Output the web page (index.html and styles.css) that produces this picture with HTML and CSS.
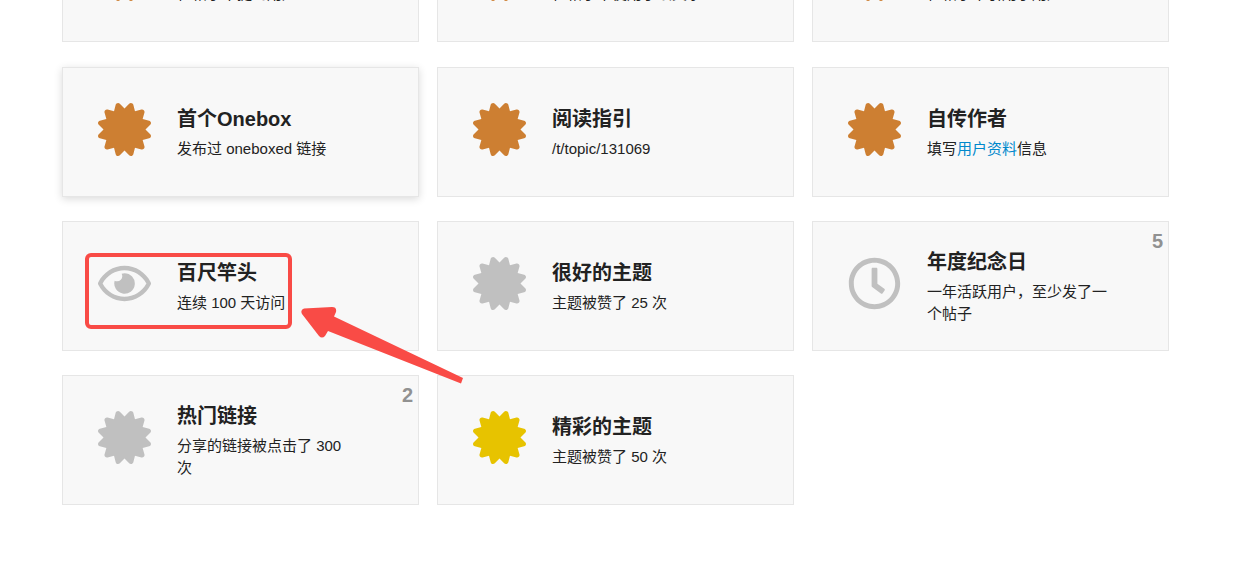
FILE: index.html
```html
<!DOCTYPE html>
<html lang="zh-CN">
<head>
  <meta charset="UTF-8" />
  <title>徽章</title>
  <link rel="stylesheet" href="styles.css">
</head>
<body>
  <!-- 图标定义 -->
  <svg class="icon-defs" aria-hidden="true">
    <symbol id="certificate" viewBox="0 0 512 512">
      <path d="M458.622 255.92l45.985-45.005c13.708-12.977 7.316-36.039-10.664-40.339l-62.65-15.99 17.661-62.015c4.991-17.838-11.829-34.663-29.661-29.671l-61.994 17.667-15.984-62.671C337.085.197 313.765-6.276 300.99 7.228L256 53.57 211.011 7.229c-12.63-13.351-36.047-7.234-40.325 10.668l-15.984 62.671-61.995-17.667C74.87 57.907 58.056 74.738 63.046 92.572l17.661 62.015-62.65 15.99C.069 174.878-6.31 197.944 7.392 210.915l45.985 45.005-45.985 45.004c-13.708 12.977-7.316 36.039 10.664 40.339l62.65 15.99-17.661 62.015c-4.991 17.838 11.829 34.663 29.661 29.671l61.994-17.667 15.984 62.671c4.439 18.575 27.696 24.018 40.325 10.668L256 458.61l44.989 46.001c12.5 13.488 35.987 7.486 40.325-10.668l15.984-62.671 61.994 17.667c17.836 4.994 34.651-11.837 29.661-29.671l-17.661-62.015 62.65-15.99c17.987-4.302 24.366-27.367 10.664-40.339l-45.984-45.004z"/>
    </symbol>
    <symbol id="eye" viewBox="0 0 576 512">
      <path d="M288 144a110.94 110.94 0 0 0-31.24 5 55.4 55.4 0 0 1 7.24 27 56 56 0 0 1-56 56 55.4 55.4 0 0 1-27-7.24A111.71 111.71 0 1 0 288 144zm284.52 97.4C518.29 135.59 410.93 64 288 64S57.68 135.64 3.48 241.41a32.35 32.35 0 0 0 0 29.19C57.71 376.41 165.07 448 288 448s230.32-71.64 284.52-177.41a32.35 32.35 0 0 0 0-29.19zM288 400c-98.65 0-189.09-55-237.93-144C98.91 167 189.34 112 288 112s189.09 55 237.93 144C477.1 345 386.66 400 288 400z"/>
    </symbol>
    <symbol id="clock" viewBox="0 0 512 512">
      <path d="M256 8C119 8 8 119 8 256s111 248 248 248 248-111 248-248S393 8 256 8zm0 448c-110.5 0-200-89.5-200-200S145.5 56 256 56s200 89.5 200 200-89.5 200-200 200zm61.8-104.4l-84.9-61.7c-3.1-2.3-4.9-5.9-4.9-9.7V116c0-6.6 5.4-12 12-12h32c6.6 0 12 5.4 12 12v141.7l66.8 48.6c5.4 3.9 6.5 11.4 2.6 16.8L334.6 349c-3.9 5.3-11.4 6.5-16.8 2.6z"/>
    </symbol>
  </svg>

  <main class="badges">
    <!-- 第一行只露出底部 -->
    <div class="card cut">
      <svg class="icon bronze"><use href="#certificate"/></svg>
      <div class="info"><p>在帖子中提到用户</p></div>
    </div>
    <div class="card cut">
      <svg class="icon bronze"><use href="#certificate"/></svg>
      <div class="info"><p>在帖子中使用了绘文字</p></div>
    </div>
    <div class="card cut">
      <svg class="icon bronze"><use href="#certificate"/></svg>
      <div class="info"><p>在帖子中引用了用户</p></div>
    </div>

    <div class="card active">
      <svg class="icon bronze"><use href="#certificate"/></svg>
      <div class="info">
        <h3><a href="#">首个Onebox</a></h3>
        <p>发布过 oneboxed 链接</p>
      </div>
    </div>
    <div class="card">
      <svg class="icon bronze"><use href="#certificate"/></svg>
      <div class="info">
        <h3><a href="#">阅读指引</a></h3>
        <p>/t/topic/131069</p>
      </div>
    </div>
    <div class="card">
      <svg class="icon bronze"><use href="#certificate"/></svg>
      <div class="info">
        <h3><a href="#">自传作者</a></h3>
        <p>填写<a href="#">用户资料</a>信息</p>
      </div>
    </div>

    <div class="card marked">
      <svg class="icon silver"><use href="#eye"/></svg>
      <div class="info">
        <h3><a href="#">百尺竿头</a></h3>
        <p>连续 100 天访问</p>
      </div>
      <div class="mark-box"></div>
      <svg class="mark-arrow" viewBox="0 0 164 80" aria-hidden="true">
        <path d="M3 3.500L31 2Q36 2 35 7L33 11.500L162 73L160 78.500L27 26L24 31Q21 34 18 31L1 9Q-1 5 3 3.500Z"/>
      </svg>
    </div>
    <div class="card">
      <svg class="icon silver"><use href="#certificate"/></svg>
      <div class="info">
        <h3><a href="#">很好的主题</a></h3>
        <p>主题被赞了 25 次</p>
      </div>
    </div>
    <div class="card">
      <svg class="icon silver"><use href="#clock"/></svg>
      <div class="info">
        <h3><a href="#">年度纪念日</a></h3>
        <p>一年活跃用户，至少发了一个帖子</p>
      </div>
      <span class="count">5</span>
    </div>

    <div class="card">
      <svg class="icon silver"><use href="#certificate"/></svg>
      <div class="info">
        <h3><a href="#">热门链接</a></h3>
        <p>分享的链接被点击了 300 次</p>
      </div>
      <span class="count">2</span>
    </div>
    <div class="card">
      <svg class="icon gold"><use href="#certificate"/></svg>
      <div class="info">
        <h3><a href="#">精彩的主题</a></h3>
        <p>主题被赞了 50 次</p>
      </div>
    </div>
  </main>
</body>
</html>
```
FILE: styles.css
```css
body {
  margin: 0;
  background: #fff;
  color: #222;
  font-family: "Liberation Sans", "Noto Sans CJK SC", sans-serif;
  font-size: 15px;
  line-height: 22px;
}

a {
  color: #08c;
  text-decoration: none;
}

.icon-defs {
  display: none;
}

.badges {
  display: grid;
  grid-template-columns: repeat(3, 1fr);
  gap: 24px 18px;
  padding: 0 80px 68px 62px;
}

.card {
  position: relative;
  box-sizing: border-box;
  min-height: 130px;
  display: flex;
  align-items: center;
  padding: 0 60px 0 35px;
  border: 1px solid #e6e6e6;
  background: #f8f8f8;
}

.card.cut {
  min-height: 0;
  height: 42px;
  margin-bottom: 1px;
  border-top: 0;
  align-items: flex-end;
  padding-bottom: 36px;
  overflow: hidden;
}

.card.active {
  box-shadow: 0 2px 8px rgba(0, 0, 0, 0.15);
}

.icon {
  flex: none;
  width: 53px;
  height: 53px;
  margin: 0 26px 6px 0;
  fill: currentColor;
}

.cut .icon {
  margin-bottom: 4px;
}

.bronze {
  color: #cd7f32;
}

.silver {
  color: #c0c0c0;
}

.gold {
  color: #e7c300;
}

.info {
  flex: 1;
  min-width: 0;
}

.info h3 {
  margin: 4px 0 8px;
  font-size: 20px;
  line-height: 22px;
}

.info h3 a {
  color: #222;
}

.info p {
  margin: 0;
}

.count {
  position: absolute;
  top: 8px;
  right: 5px;
  color: #919191;
  font-size: 20px;
  font-weight: bold;
}

/* 红框和箭头标注 */
.card.marked {
  z-index: 1;
}

.mark-box {
  position: absolute;
  top: 31px;
  left: 22px;
  box-sizing: border-box;
  width: 207px;
  height: 76px;
  border: 4px solid #f94b46;
  border-radius: 6px;
}

.mark-arrow {
  position: absolute;
  top: 83px;
  left: 238px;
  width: 164px;
  height: 80px;
  fill: #f94b46;
}
```
